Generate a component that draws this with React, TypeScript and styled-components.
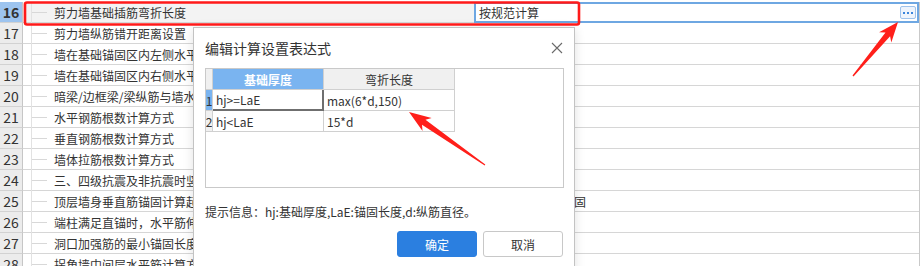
import styled, { createGlobalStyle } from 'styled-components'

const GlobalStyle = createGlobalStyle`
  html, body {
    margin: 0;
    padding: 0;
    background: #ffffff;
  }
  body {
    font-family: "Noto Sans CJK SC", "Noto Sans", sans-serif;
    color: #333333;
  }
`

interface SettingRow {
  no: number
  name: string
  value?: string
}

// values of rows 17-28 sit behind the dialog, only row 25's tail peeks out
const rows: SettingRow[] = [
  { no: 16, name: '剪力墙基础插筋弯折长度', value: '按规范计算' },
  { no: 17, name: '剪力墙纵筋错开距离设置' },
  { no: 18, name: '墙在基础锚固区内左侧水平分布筋保护层厚度' },
  { no: 19, name: '墙在基础锚固区内右侧水平分布筋保护层厚度' },
  { no: 20, name: '暗梁/边框梁/梁纵筋与墙水平筋的位置关系' },
  { no: 21, name: '水平钢筋根数计算方式' },
  { no: 22, name: '垂直钢筋根数计算方式' },
  { no: 23, name: '墙体拉筋根数计算方式' },
  { no: 24, name: '三、四级抗震及非抗震时竖向分布筋搭接' },
  { no: 25, name: '顶层墙身垂直筋锚固计算起点', value: '伸至板顶弯折后锚固' },
  { no: 26, name: '端柱满足直锚时，水平筋伸入端柱长度' },
  { no: 27, name: '洞口加强筋的最小锚固长度' },
  { no: 28, name: '拐角墙中间层水平筋计算方式' },
]

const Screen = styled.div`
  position: relative;
  width: 921px;
  height: 266px;
  overflow: hidden;
  padding-top: 2px;
  box-sizing: border-box;
  background: #ffffff;
`

const Grid = styled.div`
  display: flex;
  flex-direction: column;
  width: 920px;
  border-right: 1px solid #c9c9c9;
  box-sizing: border-box;
`

const Row = styled.div`
  display: grid;
  grid-template-columns: 23px 28px 423px 445px;
  height: 21px;
`

const NumCell = styled.div<{ $active?: boolean }>`
  display: flex;
  align-items: center;
  justify-content: center;
  box-sizing: border-box;
  border-right: 1px solid #c6c6c6;
  border-bottom: 1px solid #d2d2d2;
  background: ${p => (p.$active ? '#9dc4ef' : '#ececec')};
  font-size: 14px;
  font-weight: ${p => (p.$active ? 700 : 400)};
  color: #333333;
  line-height: 1;
`

const TreeCell = styled.div<{ $active?: boolean }>`
  position: relative;
  box-sizing: border-box;
  border-bottom: 1px solid #d6d6d6;
  background: ${p => (p.$active ? '#f3f3f3' : '#ffffff')};

  &::before {
    content: '';
    position: absolute;
    left: 8px;
    top: 0;
    bottom: -1px;
    width: 1px;
    background: #e2e2e2;
  }
  &::after {
    content: '';
    position: absolute;
    left: 9px;
    top: 10px;
    width: 15px;
    height: 1px;
    background: #d8d8d8;
  }
`

const NameCell = styled.div<{ $active?: boolean }>`
  display: flex;
  align-items: center;
  box-sizing: border-box;
  padding-left: 3px;
  border-bottom: 1px solid #d6d6d6;
  background: ${p => (p.$active ? '#f3f3f3' : '#ffffff')};
  font-size: 12px;
  color: #333333;
  white-space: nowrap;
`

const ValueCell = styled.div<{ $active?: boolean }>`
  display: flex;
  align-items: center;
  justify-content: space-between;
  box-sizing: border-box;
  padding: 0 1px 0 4px;
  border-bottom: 1px solid #d6d6d6;
  font-size: 12px;
  color: #333333;
  white-space: nowrap;
  ${p =>
    p.$active &&
    `
    border: 2px solid #6ea7e2;
    padding-left: 3px;
  `}
`

const MoreButton = styled.div`
  display: flex;
  align-items: center;
  justify-content: center;
  gap: 2px;
  width: 16px;
  height: 13px;
  box-sizing: border-box;
  border: 1px solid #9fc3ec;
  border-radius: 2px;
  background: #eef4fc;

  span {
    width: 2px;
    height: 2px;
    background: #3b85dc;
  }
`

const Dialog = styled.div`
  position: absolute;
  left: 193px;
  top: 27px;
  width: 382px;
  height: 262px;
  box-sizing: border-box;
  background: #ffffff;
  border: 1px solid #c3c3c3;
  box-shadow: 0 2px 10px rgba(0, 0, 0, 0.12);
  display: flex;
  flex-direction: column;
`

const TitleBar = styled.div`
  display: flex;
  align-items: center;
  justify-content: space-between;
  height: 40px;
  padding: 0 11px 0 11px;
`

const Title = styled.span`
  font-size: 14px;
  color: #333333;
`

const CloseBtn = styled.div`
  display: flex;
  width: 12px;
  height: 12px;
`

const TableBox = styled.div`
  margin: 0 10px 0 11px;
  height: 120px;
  box-sizing: border-box;
  border: 1px solid #c9c9c9;
`

const ExprGrid = styled.div`
  display: grid;
  grid-template-columns: 7px 111px 131px;
  grid-auto-rows: 21px;
`

const HeadCell = styled.div<{ $blue?: boolean }>`
  display: flex;
  align-items: center;
  justify-content: center;
  box-sizing: border-box;
  border-right: 1px solid #d0d0d0;
  border-bottom: 1px solid #d0d0d0;
  background: ${p => (p.$blue ? '#7ab4f0' : '#f0f0f0')};
  color: ${p => (p.$blue ? '#ffffff' : '#333333')};
  font-weight: ${p => (p.$blue ? 700 : 400)};
  font-size: 12px;
`

const IndexCell = styled.div<{ $active?: boolean }>`
  display: flex;
  align-items: center;
  justify-content: center;
  overflow: hidden;
  box-sizing: border-box;
  border-right: 1px solid #d0d0d0;
  border-bottom: 1px solid #d0d0d0;
  background: ${p => (p.$active ? '#7ab4f0' : '#f0f0f0')};
  font-size: 12px;
  color: #333333;
`

const ExprCell = styled.div<{ $selected?: boolean }>`
  display: flex;
  align-items: center;
  box-sizing: border-box;
  padding-left: 3px;
  border-right: ${p => (p.$selected ? '2px solid #6f6f6f' : '1px solid #d0d0d0')};
  border-bottom: ${p => (p.$selected ? '2px solid #6f6f6f' : '1px solid #d0d0d0')};
  font-size: 12px;
  color: #333333;
  white-space: nowrap;
`

const Hint = styled.div`
  margin: 15px 0 0 11px;
  font-size: 12px;
  line-height: 18px;
  color: #333333;
`

const ButtonRow = styled.div`
  display: flex;
  justify-content: flex-end;
  gap: 6px;
  margin-top: 10px;
  padding-right: 11px;
`

const Button = styled.div<{ $primary?: boolean }>`
  display: flex;
  align-items: center;
  justify-content: center;
  width: 80px;
  height: 26px;
  box-sizing: border-box;
  border-radius: 3px;
  font-size: 12px;
  background: ${p => (p.$primary ? '#2b7fe0' : '#ffffff')};
  color: ${p => (p.$primary ? '#ffffff' : '#333333')};
  border: 1px solid ${p => (p.$primary ? '#2b7fe0' : '#c8c8c8')};
`

const Overlay = styled.svg`
  position: absolute;
  left: 0;
  top: 0;
  pointer-events: none;
`

function arrowPoints(tx: number, ty: number, px: number, py: number, headLen: number, half: number) {
  const dx = px - tx
  const dy = py - ty
  const len = Math.hypot(dx, dy)
  const ux = dx / len
  const uy = dy / len
  const nx = -uy
  const ny = ux
  const bx = px - ux * headLen
  const by = py - uy * headLen
  const wx = bx - ux * 4
  const wy = by - uy * 4
  const pts = [
    [tx + nx * 0.6, ty + ny * 0.6],
    [bx + nx * 3, by + ny * 3],
    [wx + nx * half, wy + ny * half],
    [px, py],
    [wx - nx * half, wy - ny * half],
    [bx - nx * 3, by - ny * 3],
    [tx - nx * 0.6, ty - ny * 0.6],
  ]
  return pts.map(p => `${p[0].toFixed(1)},${p[1].toFixed(1)}`).join(' ')
}

export default function App() {
  return (
    <Screen>
      <GlobalStyle />
      <Grid>
        {rows.map((r, i) => {
          const active = i === 0
          return (
            <Row key={r.no}>
              <NumCell $active={active}>{r.no}</NumCell>
              <TreeCell $active={active} />
              <NameCell $active={active}>{r.name}</NameCell>
              <ValueCell $active={active}>
                <span>{r.value}</span>
                {active && (
                  <MoreButton>
                    <span />
                    <span />
                    <span />
                  </MoreButton>
                )}
              </ValueCell>
            </Row>
          )
        })}
      </Grid>

      <Dialog>
        <TitleBar>
          <Title>编辑计算设置表达式</Title>
          <CloseBtn>
            <svg width="12" height="12" viewBox="0 0 12 12">
              <path d="M1 1 L11 11 M11 1 L1 11" stroke="#6a6a6a" strokeWidth="1.1" fill="none" />
            </svg>
          </CloseBtn>
        </TitleBar>
        <TableBox>
          <ExprGrid>
            <HeadCell />
            <HeadCell $blue>基础厚度</HeadCell>
            <HeadCell>弯折长度</HeadCell>
            <IndexCell $active>1</IndexCell>
            <ExprCell $selected>hj&gt;=LaE</ExprCell>
            <ExprCell>max(6*d,150)</ExprCell>
            <IndexCell>2</IndexCell>
            <ExprCell>hj&lt;LaE</ExprCell>
            <ExprCell>15*d</ExprCell>
          </ExprGrid>
        </TableBox>
        <Hint>提示信息：hj:基础厚度,LaE:锚固长度,d:纵筋直径。</Hint>
        <ButtonRow>
          <Button $primary>确定</Button>
          <Button>取消</Button>
        </ButtonRow>
      </Dialog>

      <Overlay width="921" height="266" viewBox="0 0 921 266">
        <rect x="25" y="2.5" width="554" height="22" rx="2" fill="none" stroke="#ff1a1a" strokeWidth="2.6" />
        <polygon points={arrowPoints(853, 76, 898, 22, 16, 8)} fill="#ff1f1a" />
        <polygon points={arrowPoints(485, 165, 409, 112, 18, 8)} fill="#ff1f1a" />
      </Overlay>
    </Screen>
  )
}
